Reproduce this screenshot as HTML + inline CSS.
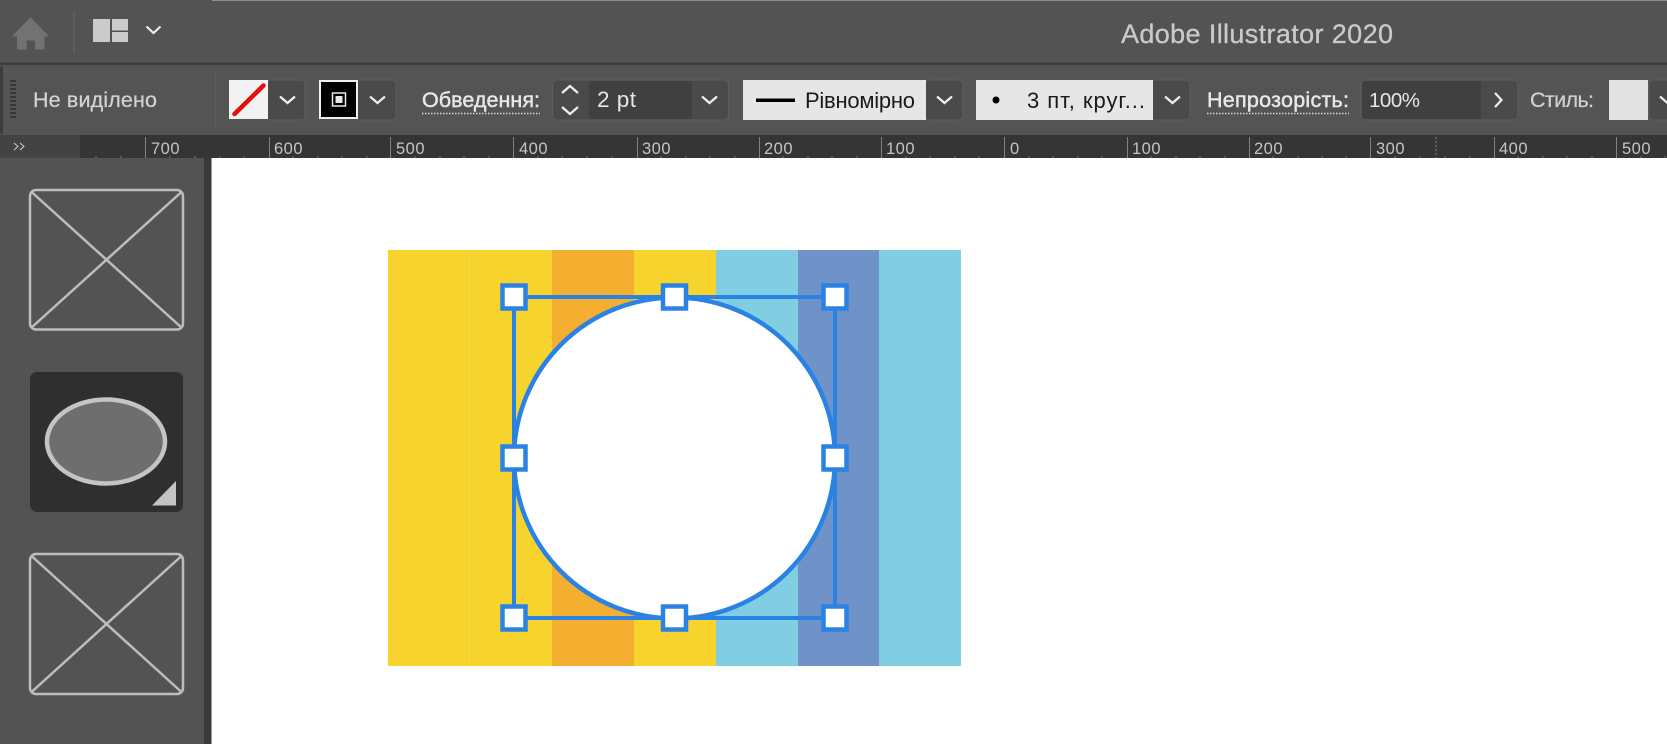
<!DOCTYPE html>
<html>
<head>
<meta charset="utf-8">
<style>
html,body{margin:0;padding:0;background:#fff;width:1667px;height:744px;overflow:hidden}
svg{display:block;position:absolute;left:0;top:0}
text{font-family:"Liberation Sans","DejaVu Sans",sans-serif}
</style>
</head>
<body>
<svg width="1667" height="744" viewBox="0 0 1667 744" xmlns="http://www.w3.org/2000/svg">
<rect width="1667" height="744" fill="#fff"/>
<!-- top bar -->
<rect width="1667" height="63" fill="#535353"/>
<rect x="212" y="0" width="1455" height="1" fill="#8c8c8c"/>
<rect y="62.500" width="1667" height="2.500" fill="#3e3e3e"/>
<path d="M30.500 18 L48 36 H44 V49 H35.500 V40 H26 V49 H17.500 V36 H13 Z" fill="#727272" stroke="#727272" stroke-width="1" stroke-linejoin="round"/>
<rect x="73" y="12" width="2" height="41" fill="#5e5e5e"/>
<rect x="93" y="19" width="17" height="23" fill="#cbcbcb"/>
<rect x="112" y="19" width="16" height="11.500" fill="#cbcbcb"/>
<rect x="112" y="32" width="16" height="10" fill="#cbcbcb"/>
<path d="M146.500 26.500 L153.500 33 L160.500 26.500" fill="none" stroke="#f0f0f0" stroke-width="2.200"/>
<text x="1121" y="43" font-size="27" fill="#cacaca" stroke="#cacaca" stroke-width=".3" textLength="272" lengthAdjust="spacing">Adobe Illustrator 2020</text>

<!-- options bar -->
<rect y="65" width="1667" height="70" fill="#545454"/>
<rect x="0" y="66" width="3" height="68" rx="1.500" fill="#3c3c3c"/>
<g fill="#363636">
<rect x="10" y="80" width="6" height="2"/><rect x="10" y="84" width="6" height="2"/><rect x="10" y="88" width="6" height="2"/><rect x="10" y="92" width="6" height="2"/><rect x="10" y="96" width="6" height="2"/><rect x="10" y="100" width="6" height="2"/><rect x="10" y="104" width="6" height="2"/><rect x="10" y="108" width="6" height="2"/><rect x="10" y="112" width="6" height="2"/><rect x="10" y="116" width="6" height="2"/>
</g>
<text x="33" y="107" font-size="21.500" fill="#d2d2d2" stroke="#d2d2d2" stroke-width=".25" textLength="124" lengthAdjust="spacing">Не виділено</text>
<rect x="215" y="74" width="1" height="52" fill="#5e5e5e"/>

<!-- fill swatch -->
<rect x="266" y="80" width="39" height="40" rx="4" fill="#4a4a4a" stroke="#5e5e5e"/>
<rect x="229" y="80" width="39" height="39" fill="#f2f2f2"/>
<path d="M234.500 114 L263.500 85.500" stroke="#e90c0c" stroke-width="4.500" stroke-linecap="round"/>
<path d="M280 96.500 L287.500 103 L295 96.500" fill="none" stroke="#f0f0f0" stroke-width="2.200"/>

<!-- stroke swatch -->
<rect x="356" y="80" width="40" height="40" rx="4" fill="#4a4a4a" stroke="#5e5e5e"/>
<rect x="320" y="81" width="37" height="37" fill="#000" stroke="#f0f0f0" stroke-width="2"/>
<rect x="332.500" y="93" width="13" height="13" fill="none" stroke="#e8e8e8" stroke-width="1.500"/>
<rect x="335.500" y="96" width="7" height="7" fill="#e8e8e8"/>
<path d="M370 96.500 L377.500 103 L385 96.500" fill="none" stroke="#f0f0f0" stroke-width="2.200"/>

<!-- stroke label -->
<text x="422" y="107" font-size="21.500" fill="#e8e8e8" stroke="#e8e8e8" stroke-width=".45" textLength="118" lengthAdjust="spacing">Обведення:</text>
<path d="M422 113.500 H540" stroke="#d8d8d8" stroke-width="1.500" stroke-dasharray="1.500 1.500"/>

<!-- weight -->
<rect x="552.500" y="80" width="176" height="40" rx="4" fill="#4a4a4a" stroke="#5e5e5e"/>
<rect x="589" y="81" width="103" height="38" fill="#404040"/>
<path d="M562 93 L570 86 L578 93" fill="none" stroke="#f0f0f0" stroke-width="2.200"/>
<path d="M562 107 L570 114 L578 107" fill="none" stroke="#f0f0f0" stroke-width="2.200"/>
<text x="597" y="107" font-size="22.500" fill="#e6e6e6" textLength="39" lengthAdjust="spacing">2 pt</text>
<path d="M702 96.500 L709.500 103 L717 96.500" fill="none" stroke="#f0f0f0" stroke-width="2.200"/>

<!-- line style -->
<rect x="925" y="80" width="38" height="40" rx="4" fill="#4a4a4a" stroke="#5e5e5e"/>
<rect x="743" y="80" width="183" height="40" fill="#e6e6e6"/>
<rect x="756" y="98.500" width="39" height="3.500" fill="#000"/>
<text x="805" y="108" font-size="22" fill="#1a1a1a" textLength="110" lengthAdjust="spacing">Рівномірно</text>
<path d="M937 96.500 L944.500 103 L952 96.500" fill="none" stroke="#f0f0f0" stroke-width="2.200"/>

<!-- brush -->
<rect x="1152" y="80" width="38" height="40" rx="4" fill="#4a4a4a" stroke="#5e5e5e"/>
<rect x="976" y="80" width="177" height="40" fill="#e6e6e6"/>
<circle cx="996" cy="100" r="3.500" fill="#000"/>
<text x="1027" y="108" font-size="22" fill="#1a1a1a" textLength="118" lengthAdjust="spacing">3 пт, круг...</text>
<path d="M1165 96.500 L1172.500 103 L1180 96.500" fill="none" stroke="#f0f0f0" stroke-width="2.200"/>

<!-- opacity -->
<text x="1207" y="107" font-size="21.500" fill="#e8e8e8" stroke="#e8e8e8" stroke-width=".45" textLength="142" lengthAdjust="spacing">Непрозорість:</text>
<path d="M1207 113.500 H1349" stroke="#d8d8d8" stroke-width="1.500" stroke-dasharray="1.500 1.500"/>
<rect x="1361" y="80" width="157" height="40" rx="4" fill="#4a4a4a" stroke="#5e5e5e"/>
<rect x="1362" y="81" width="119" height="38" rx="3" fill="#404040"/>
<text x="1369" y="107" font-size="20.500" fill="#e6e6e6" textLength="51" lengthAdjust="spacing">100%</text>
<path d="M1495 93 L1501.500 100 L1495 107" fill="none" stroke="#f0f0f0" stroke-width="2.200"/>
<text x="1530" y="107" font-size="21.500" fill="#d0d0d0" stroke="#d0d0d0" stroke-width=".25" textLength="64" lengthAdjust="spacing">Стиль:</text>
<rect x="1649" y="80" width="30" height="40" rx="4" fill="#4a4a4a" stroke="#5e5e5e"/>
<rect x="1609" y="80" width="39" height="40" fill="#e2e2e2"/>
<path d="M1660 96.500 L1667.500 103 L1675 96.500" fill="none" stroke="#f0f0f0" stroke-width="2.200"/>

<!-- ruler -->
<rect y="135" width="1667" height="23" fill="#353535"/>
<rect y="135" width="80" height="23" fill="#434343"/>
<path d="M14 143 L18 146.500 L14 150 M20 143 L24 146.500 L20 150" fill="none" stroke="#cfcfcf" stroke-width="1"/>
<g fill="#828282">
<rect x="145" y="137" width="1" height="21"/><rect x="269" y="137" width="1" height="21"/><rect x="390" y="137" width="1" height="21"/><rect x="513" y="137" width="1" height="21"/><rect x="637" y="137" width="1" height="21"/><rect x="759" y="137" width="1" height="21"/><rect x="881" y="137" width="1" height="21"/><rect x="1004" y="137" width="1" height="21"/><rect x="1127" y="137" width="1" height="21"/><rect x="1249" y="137" width="1" height="21"/><rect x="1370" y="137" width="1" height="21"/><rect x="1494" y="137" width="1" height="21"/><rect x="1616" y="137" width="1" height="21"/>
</g>
<path d="M1436 137 V158" stroke="#828282" stroke-width="1" stroke-dasharray="2 2"/>
<path d="M96 156V158 M121 156V158 M170 156V158 M195 156V158 M220 156V158 M244 156V158 M293 156V158 M318 156V158 M342 156V158 M367 156V158 M415 156V158 M440 156V158 M464 156V158 M489 156V158 M538 156V158 M562 156V158 M587 156V158 M612 156V158 M661 156V158 M686 156V158 M710 156V158 M735 156V158 M783 156V158 M808 156V158 M832 156V158 M857 156V158 M906 156V158 M930 156V158 M955 156V158 M979 156V158 M1029 156V158 M1053 156V158 M1078 156V158 M1102 156V158 M1151 156V158 M1176 156V158 M1200 156V158 M1225 156V158 M1273 156V158 M1298 156V158 M1322 156V158 M1346 156V158 M1395 156V158 M1420 156V158 M1445 156V158 M1470 156V158 M1518 156V158 M1543 156V158 M1567 156V158 M1592 156V158 M1641 156V158 M1665 156V158" stroke="#777" stroke-width="1"/>
<g font-size="16.500" fill="#c4c4c4" letter-spacing=".5">
<text x="151" y="154">700</text><text x="274" y="154">600</text><text x="396" y="154">500</text><text x="519" y="154">400</text><text x="642" y="154">300</text><text x="764" y="154">200</text><text x="886" y="154">100</text><text x="1010" y="154">0</text><text x="1132" y="154">100</text><text x="1254" y="154">200</text><text x="1376" y="154">300</text><text x="1499" y="154">400</text><text x="1622" y="154">500</text>
</g>

<!-- left panel -->
<rect y="158" width="204" height="586" fill="#535353"/>
<rect x="204" y="158" width="7" height="586" fill="#3a3a3a"/>
<rect x="211" y="158" width="1" height="586" fill="#9a9a9a"/>
<g fill="none" stroke="#bdbdbd" stroke-width="2.500">
<rect x="30" y="190" width="153" height="139.500" rx="6"/>
<path d="M31 191.500 L182 328 M182 191.500 L31 328"/>
<rect x="30" y="554" width="153" height="140" rx="6"/>
<path d="M31 555.500 L182 692.500 M182 555.500 L31 692.500"/>
</g>
<rect x="30" y="372" width="153" height="140" rx="7" fill="#2f2f2f"/>
<ellipse cx="106" cy="441.500" rx="59" ry="42" fill="#6e6e6e" stroke="#c4c4c4" stroke-width="4.500"/>
<path d="M152 505.500 L176 481 V505.500 Z" fill="#c4c4c4"/>

<!-- artwork -->
<rect x="388" y="250" width="165" height="416" fill="#f7d32e"/>
<rect x="469" y="250" width="1" height="416" fill="#f9d843"/>
<rect x="552" y="250" width="82" height="416" fill="#f4ae30"/>
<rect x="634" y="250" width="82" height="416" fill="#f7d32e"/>
<rect x="716" y="250" width="82" height="416" fill="#81cde2"/>
<rect x="798" y="250" width="81" height="416" fill="#6f93c8"/>
<rect x="879" y="250" width="82" height="416" fill="#81cde2"/>

<!-- selection -->
<circle cx="674.500" cy="458" r="160.500" fill="#fff" stroke="#2a82e4" stroke-width="4.500"/>
<rect x="514" y="297" width="321" height="321" fill="none" stroke="#2a82e4" stroke-width="4"/>
<g fill="#fff" stroke="#2a82e4" stroke-width="4.500">
<rect x="502.500" y="285.500" width="23" height="23"/>
<rect x="663" y="285.500" width="23" height="23"/>
<rect x="823.500" y="285.500" width="23" height="23"/>
<rect x="502.500" y="446.500" width="23" height="23"/>
<rect x="823.500" y="446.500" width="23" height="23"/>
<rect x="502.500" y="606.500" width="23" height="23"/>
<rect x="663" y="606.500" width="23" height="23"/>
<rect x="823.500" y="606.500" width="23" height="23"/>
</g>
</svg>
</body>
</html>
